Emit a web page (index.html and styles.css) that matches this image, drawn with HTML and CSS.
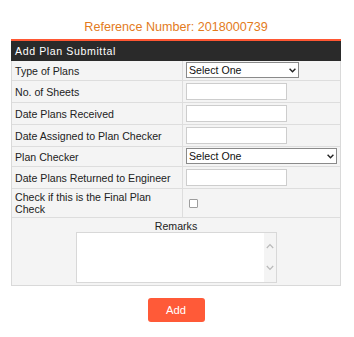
FILE: index.html
```html
<!DOCTYPE html>
<html lang="en">
<head>
<meta charset="utf-8">
<title>Add Plan Submittal</title>
<link rel="stylesheet" href="styles.css">
</head>
<body>
<div class="page">
  <div class="title">Reference Number: 2018000739</div>
  <div class="panel">
    <div class="panel-head">Add Plan Submittal</div>
    <div class="form">
      <div class="label">Type of Plans</div>
      <div class="field sel"><select class="select short"><option>Select One</option></select></div>

      <div class="label">No. of Sheets</div>
      <div class="field inp"><input class="text" type="text"></div>

      <div class="label">Date Plans Received</div>
      <div class="field inp"><input class="text" type="text"></div>

      <div class="label">Date Assigned to Plan Checker</div>
      <div class="field inp"><input class="text" type="text"></div>

      <div class="label">Plan Checker</div>
      <div class="field sel"><select class="select long"><option>Select One</option></select></div>

      <div class="label">Date Plans Returned to Engineer</div>
      <div class="field inp"><input class="text" type="text"></div>

      <div class="label two">Check if this is the Final Plan Check</div>
      <div class="field"><input class="check" type="checkbox"></div>

      <div class="remarks">
        <div class="remarks-label">Remarks</div>
        <div class="textbox">
          <textarea class="area"></textarea>
          <div class="scroll">
            <svg width="8" height="6" viewBox="0 0 8 6"><path d="M0.8 5 L4 1.6 L7.2 5" fill="none" stroke="#b9b9b9" stroke-width="1.2"/></svg>
            <svg width="8" height="6" viewBox="0 0 8 6"><path d="M0.8 1 L4 4.4 L7.2 1" fill="none" stroke="#b9b9b9" stroke-width="1.2"/></svg>
          </div>
        </div>
      </div>
    </div>
  </div>
  <button class="add" type="button">Add</button>
</div>
</body>
</html>
```
FILE: styles.css
```css
* { box-sizing: border-box; }

body {
  margin: 0;
  background: #ffffff;
  font-family: "Liberation Sans", Arial, sans-serif;
  font-size: 10.6px;
  color: #222222;
}

.page {
  width: 330px;
  margin-left: 11px;
  padding-top: 20px;
}

.title {
  height: 15px;
  line-height: 15px;
  font-size: 12.6px;
  text-align: center;
  color: #e37b1c;
}

.panel {
  margin-top: 4px;
  border-top: 2px solid #ff5733;
}

.panel-head {
  height: 20px;
  line-height: 20px;
  padding-left: 4px;
  background: #2a2a2a;
  color: #ffffff;
  letter-spacing: 0.6px;
}

.form {
  display: grid;
  grid-template-columns: 171px 1fr;
  background: #f4f4f4;
  border: 1px solid #d9d9d9;
  border-top: none;
}

.label {
  display: flex;
  align-items: center;
  padding: 0 3px;
  line-height: 12px;
  border-right: 1px solid #dddddd;
  border-bottom: 1px solid #dddddd;
}

.label.two {
  padding: 2px 3px;
}

.field {
  display: flex;
  align-items: center;
  padding: 0 3px;
  border-bottom: 1px solid #dddddd;
}

.field.sel {
  padding: 1px 3px 2px;
}

.field.inp {
  padding: 2px 3px;
}

.select {
  appearance: none;
  -webkit-appearance: none;
  height: 16px;
  margin: 0;
  padding: 0 0 0 2px;
  border: 1px solid #8a8a8a;
  border-radius: 0;
  background: #ffffff url("data:image/svg+xml,%3Csvg xmlns='http://www.w3.org/2000/svg' width='7' height='5' viewBox='0 0 7 5'%3E%3Cpath d='M0.6 0.8 L3.5 3.8 L6.4 0.8' fill='none' stroke='%23222' stroke-width='1.4'/%3E%3C/svg%3E") no-repeat right 2px center;
  font-family: "Liberation Sans", Arial, sans-serif;
  font-size: 10.6px;
  color: #111111;
  line-height: 14px;
}

.select.short { width: 113px; }
.select.long { width: 151px; }

.text {
  width: 101px;
  height: 17px;
  margin: 0;
  padding: 0 2px;
  border: 1px solid #cdcdcd;
  border-radius: 0;
  background: #ffffff;
  font-family: "Liberation Sans", Arial, sans-serif;
  font-size: 10.6px;
}

.check {
  appearance: none;
  -webkit-appearance: none;
  width: 9px;
  height: 9px;
  margin: 0 0 0 3px;
  border: 1px solid #9d9d9d;
  border-radius: 1px;
  background: #ffffff;
}

.remarks {
  grid-column: 1 / span 2;
  display: flex;
  flex-direction: column;
  align-items: center;
  padding: 2px 0 2px;
}

.remarks-label {
  line-height: 12px;
  color: #222222;
}

.textbox {
  display: flex;
  width: 201px;
  height: 51px;
  border: 1px solid #d8d8d8;
  background: #ffffff;
}

.area {
  flex: 1;
  margin: 0;
  border: none;
  outline: none;
  resize: none;
  background: #ffffff;
  font-family: "Liberation Sans", Arial, sans-serif;
  font-size: 10.6px;
}

.scroll {
  width: 12px;
  display: flex;
  flex-direction: column;
  align-items: center;
  justify-content: space-between;
  padding: 10px 0 11px;
  background: #f4f4f4;
}

.add {
  display: block;
  width: 57px;
  height: 24px;
  margin: 12px auto 0;
  padding: 0;
  border: none;
  border-radius: 3px;
  background: #ff5a38;
  color: #ffffff;
  font-family: "Liberation Sans", Arial, sans-serif;
  font-size: 11.2px;
}
```
